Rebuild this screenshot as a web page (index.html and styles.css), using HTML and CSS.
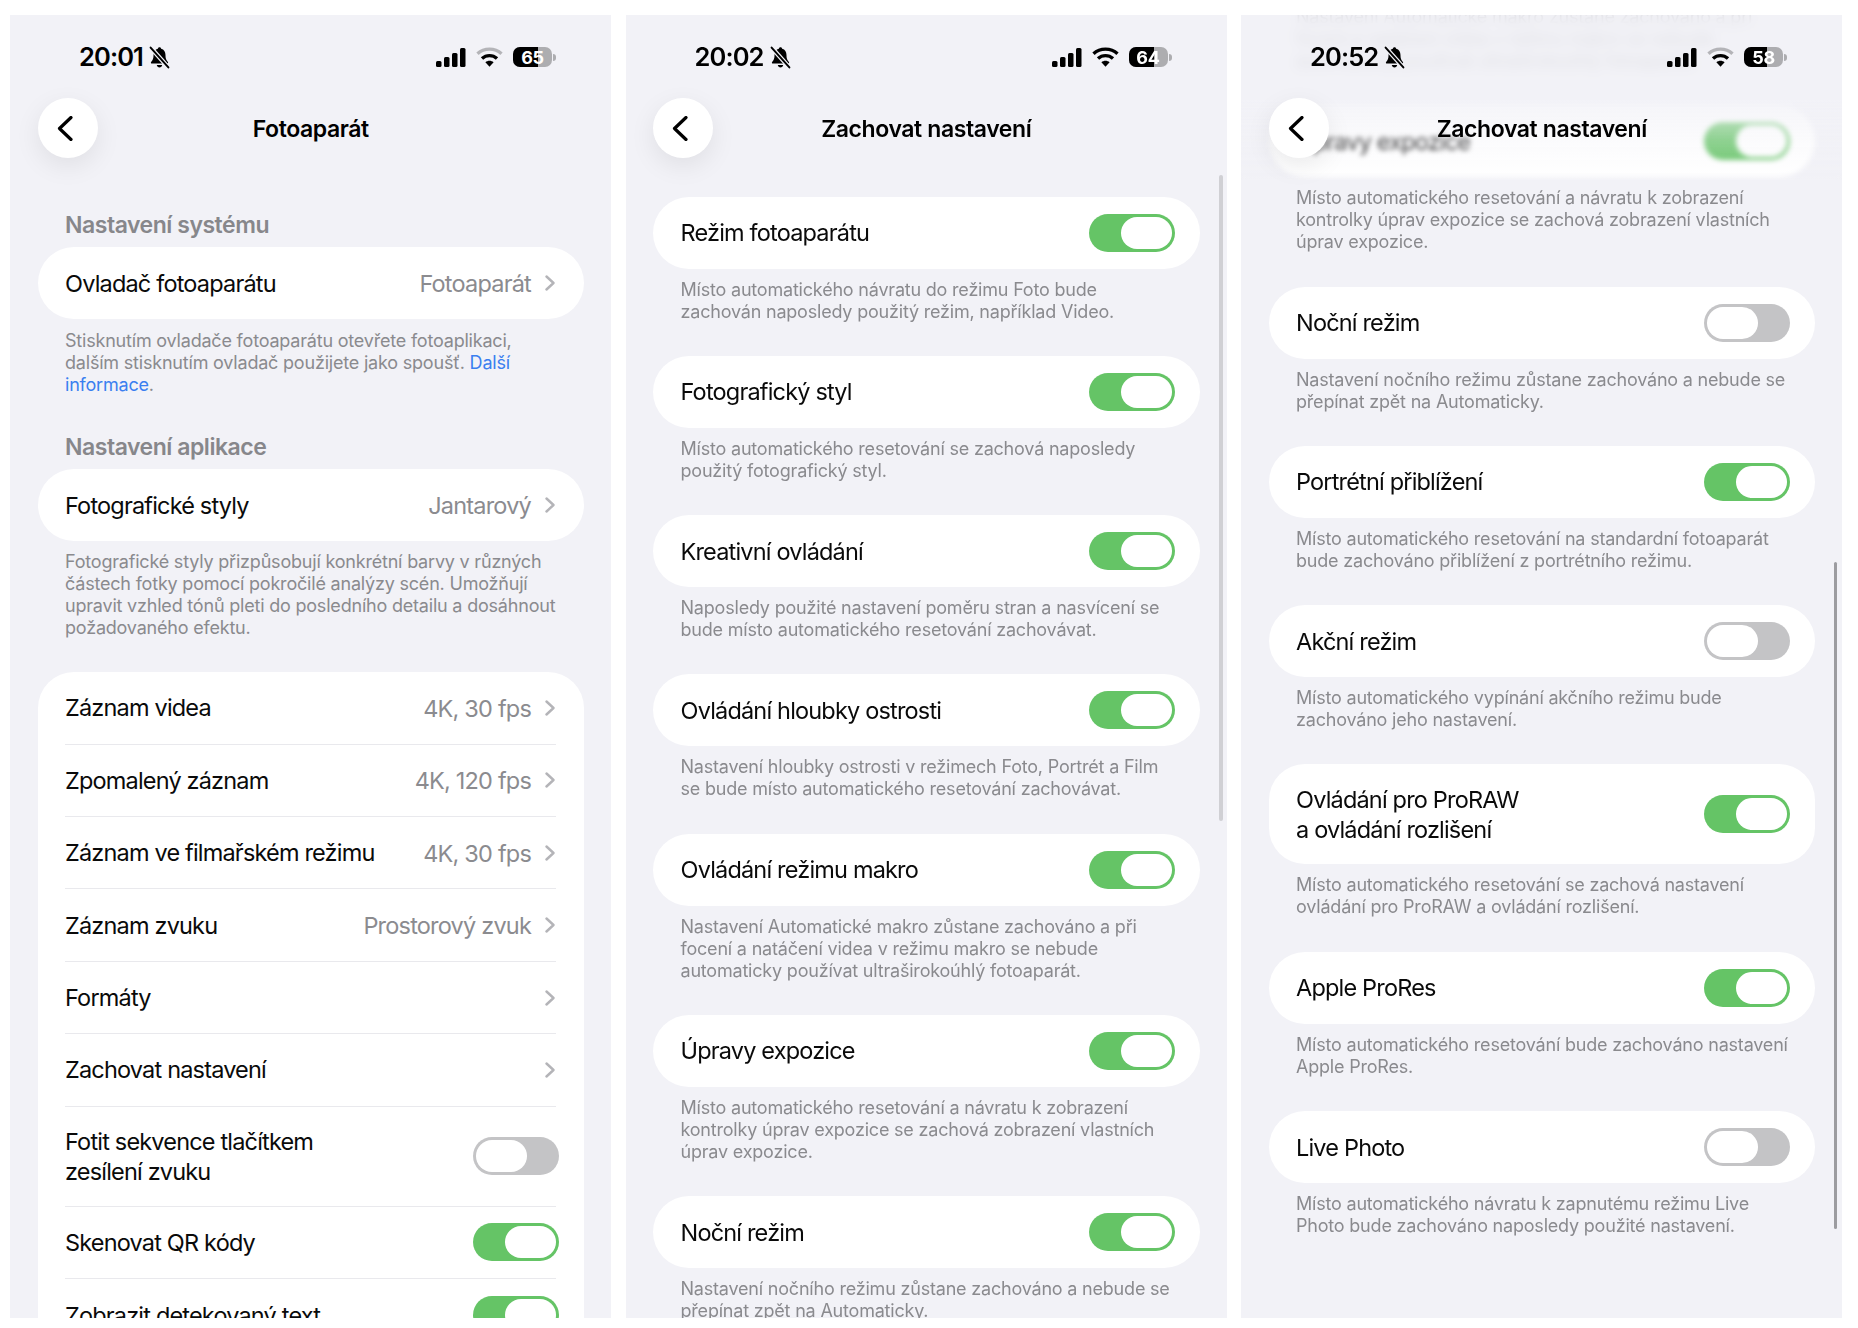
FILE: index.html
```html
<!DOCTYPE html>
<html lang="cs">
<head>
<meta charset="utf-8">
<title>Nastavení fotoaparátu</title>
<link rel="stylesheet" href="styles.css">
</head>
<body>
<svg class="defs" width="0" height="0" aria-hidden="true">
  <symbol id="bell" viewBox="0 0 20 22">
    <path d="M10 1.2c-.9 0-1.5.6-1.6 1.4C5.700 3.300 4.300 5.600 4.300 8.400c0 3.700-.6 5-2.300 6.900-.5.6-.2 1.500.7 1.500h14.600c.9 0 1.200-.9.700-1.500-1.700-1.900-2.300-3.200-2.300-6.900 0-2.800-1.400-5.100-4.100-5.800-.1-.8-.7-1.400-1.600-1.400zM7.400 18.200c.2 1.400 1.300 2.400 2.600 2.400s2.400-1 2.600-2.400z" fill="#000"/>
    <path d="M1.500 1.500l17 19" stroke="#f2f2f7" stroke-width="4.200" fill="none"/>
    <path d="M1.500 1.500l17 19" stroke="#000" stroke-width="1.900" stroke-linecap="round" fill="none"/>
  </symbol>
  <symbol id="signal" viewBox="0 0 30 19">
    <rect x="0" y="13" width="5.500" height="6" rx="1.500"/>
    <rect x="8" y="9" width="5.500" height="10" rx="1.500"/>
    <rect x="16" y="5" width="5.500" height="14" rx="1.500"/>
    <rect x="24" y="0" width="5.500" height="19" rx="1.500"/>
  </symbol>
  <symbol id="wifi" viewBox="0 0 27 20">
    <path d="M1.500 6.800C8.200 .6 18.800 .6 25.500 6.800" stroke="#b4b4b8" stroke-width="3.400" fill="none"/>
    <path d="M6 11.500c4.300-3.900 10.700-3.900 15 0" stroke="#000" stroke-width="3.400" fill="none"/>
    <path d="M9.400 15.300c2.400-2 5.800-2 8.200 0l-4.100 4.500z" fill="#000"/>
  </symbol>
  <symbol id="wifi-full" viewBox="0 0 27 20">
    <path d="M1.500 6.800C8.200 .6 18.800 .6 25.500 6.800" stroke="#000" stroke-width="3.400" fill="none"/>
    <path d="M6 11.500c4.300-3.900 10.700-3.900 15 0" stroke="#000" stroke-width="3.400" fill="none"/>
    <path d="M9.400 15.300c2.400-2 5.800-2 8.200 0l-4.100 4.500z" fill="#000"/>
  </symbol>
  <symbol id="back" viewBox="0 0 16 25">
    <path d="M14 1.500L2.500 12.500 14 23.500" stroke="#000" stroke-width="3.200" stroke-linecap="round" stroke-linejoin="round" fill="none"/>
  </symbol>
  <symbol id="chev" viewBox="0 0 10 16">
    <path d="M1.500 1.500L8.500 8 1.500 14.500" stroke="#b4b4b8" stroke-width="2.400" stroke-linecap="round" stroke-linejoin="round" fill="none"/>
  </symbol>
</svg>

<main class="page">

  <section class="phone">
    <div class="content content-a">
      <h2 class="group-title">Nastavení systému</h2>
      <div class="card">
        <div class="row"><span class="label">Ovladač fotoaparátu</span><span class="value">Fotoaparát</span><svg class="chev"><use href="#chev"/></svg></div>
      </div>
      <p class="foot foot-tight">Stisknutím ovladače fotoaparátu otevřete fotoaplikaci,<br>dalším stisknutím ovladač použijete jako spoušť. <a class="link">Další<br>informace</a>.</p>
      <h2 class="group-title">Nastavení aplikace</h2>
      <div class="card">
        <div class="row"><span class="label">Fotografické styly</span><span class="value">Jantarový</span><svg class="chev"><use href="#chev"/></svg></div>
      </div>
      <p class="foot">Fotografické styly přizpůsobují konkrétní barvy v různých<br>částech fotky pomocí pokročilé analýzy scén. Umožňují<br>upravit vzhled tónů pleti do posledního detailu a dosáhnout<br>požadovaného efektu.</p>
      <div class="card card-list">
        <div class="row row-list"><span class="label">Záznam videa</span><span class="value">4K, 30 fps</span><svg class="chev"><use href="#chev"/></svg></div>
        <div class="row row-list"><span class="label">Zpomalený záznam</span><span class="value">4K, 120 fps</span><svg class="chev"><use href="#chev"/></svg></div>
        <div class="row row-list"><span class="label">Záznam ve filmařském režimu</span><span class="value">4K, 30 fps</span><svg class="chev"><use href="#chev"/></svg></div>
        <div class="row row-list"><span class="label">Záznam zvuku</span><span class="value">Prostorový zvuk</span><svg class="chev"><use href="#chev"/></svg></div>
        <div class="row row-list"><span class="label">Formáty</span><svg class="chev"><use href="#chev"/></svg></div>
        <div class="row row-list"><span class="label">Zachovat nastavení</span><svg class="chev"><use href="#chev"/></svg></div>
        <div class="row row-list row-tall"><span class="label">Fotit sekvence tlačítkem<br>zesílení zvuku</span><span class="toggle off"><span class="knob"></span></span></div>
        <div class="row row-list"><span class="label">Skenovat QR kódy</span><span class="toggle on"><span class="knob"></span></span></div>
        <div class="row row-list"><span class="label">Zobrazit detekovaný text</span><span class="toggle on"><span class="knob"></span></span></div>
      </div>
    </div>
    <div class="status">
      <div class="clock"><span class="time">20:01</span><svg class="bell"><use href="#bell"/></svg></div>
      <div class="indicators">
        <svg class="signal"><use href="#signal"/></svg><svg class="wifi"><use href="#wifi"/></svg>
        <span class="battery"><span class="batt-body"><span class="batt-fill fill-65"></span><span class="batt-num">65</span></span><span class="batt-nub"></span></span>
      </div>
    </div>
    <header class="nav">
      <span class="back"><svg class="back-icon"><use href="#back"/></svg></span>
      <h1 class="nav-title">Fotoaparát</h1>
    </header>
  </section>

  <section class="phone">
    <div class="content content-b">
      <div class="card"><div class="row"><span class="label">Režim fotoaparátu</span><span class="toggle on"><span class="knob"></span></span></div></div>
      <p class="foot">Místo automatického návratu do režimu Foto bude<br>zachován naposledy použitý režim, například Video.</p>
      <div class="card"><div class="row"><span class="label">Fotografický styl</span><span class="toggle on"><span class="knob"></span></span></div></div>
      <p class="foot">Místo automatického resetování se zachová naposledy<br>použitý fotografický styl.</p>
      <div class="card"><div class="row"><span class="label">Kreativní ovládání</span><span class="toggle on"><span class="knob"></span></span></div></div>
      <p class="foot">Naposledy použité nastavení poměru stran a nasvícení se<br>bude místo automatického resetování zachovávat.</p>
      <div class="card"><div class="row"><span class="label">Ovládání hloubky ostrosti</span><span class="toggle on"><span class="knob"></span></span></div></div>
      <p class="foot">Nastavení hloubky ostrosti v režimech Foto, Portrét a Film<br>se bude místo automatického resetování zachovávat.</p>
      <div class="card"><div class="row"><span class="label">Ovládání režimu makro</span><span class="toggle on"><span class="knob"></span></span></div></div>
      <p class="foot">Nastavení Automatické makro zůstane zachováno a při<br>focení a natáčení videa v režimu makro se nebude<br>automaticky používat ultraširokoúhlý fotoaparát.</p>
      <div class="card"><div class="row"><span class="label">Úpravy expozice</span><span class="toggle on"><span class="knob"></span></span></div></div>
      <p class="foot">Místo automatického resetování a návratu k zobrazení<br>kontrolky úprav expozice se zachová zobrazení vlastních<br>úprav expozice.</p>
      <div class="card"><div class="row"><span class="label">Noční režim</span><span class="toggle on"><span class="knob"></span></span></div></div>
      <p class="foot">Nastavení nočního režimu zůstane zachováno a nebude se<br>přepínat zpět na Automaticky.</p>
    </div>
    <span class="scrollbar bar-b"></span>
    <div class="status">
      <div class="clock"><span class="time">20:02</span><svg class="bell"><use href="#bell"/></svg></div>
      <div class="indicators">
        <svg class="signal"><use href="#signal"/></svg><svg class="wifi"><use href="#wifi-full"/></svg>
        <span class="battery"><span class="batt-body"><span class="batt-fill fill-64"></span><span class="batt-num">64</span></span><span class="batt-nub"></span></span>
      </div>
    </div>
    <header class="nav">
      <span class="back"><svg class="back-icon"><use href="#back"/></svg></span>
      <h1 class="nav-title">Zachovat nastavení</h1>
    </header>
  </section>

  <section class="phone">
    <div class="content content-c">
      <p class="foot">Nastavení Automatické makro zůstane zachováno a při<br>focení a natáčení videa v režimu makro se nebude<br>automaticky používat ultraširokoúhlý fotoaparát.</p>
      <div class="card"><div class="row"><span class="label">Úpravy expozice</span><span class="toggle on"><span class="knob"></span></span></div></div>
      <p class="foot">Místo automatického resetování a návratu k zobrazení<br>kontrolky úprav expozice se zachová zobrazení vlastních<br>úprav expozice.</p>
      <div class="card"><div class="row"><span class="label">Noční režim</span><span class="toggle off"><span class="knob"></span></span></div></div>
      <p class="foot">Nastavení nočního režimu zůstane zachováno a nebude se<br>přepínat zpět na Automaticky.</p>
      <div class="card"><div class="row"><span class="label">Portrétní přiblížení</span><span class="toggle on"><span class="knob"></span></span></div></div>
      <p class="foot">Místo automatického resetování na standardní fotoaparát<br>bude zachováno přiblížení z portrétního režimu.</p>
      <div class="card"><div class="row"><span class="label">Akční režim</span><span class="toggle off"><span class="knob"></span></span></div></div>
      <p class="foot">Místo automatického vypínání akčního režimu bude<br>zachováno jeho nastavení.</p>
      <div class="card"><div class="row row-tall"><span class="label">Ovládání pro ProRAW<br>a ovládání rozlišení</span><span class="toggle on"><span class="knob"></span></span></div></div>
      <p class="foot">Místo automatického resetování se zachová nastavení<br>ovládání pro ProRAW a ovládání rozlišení.</p>
      <div class="card"><div class="row"><span class="label">Apple ProRes</span><span class="toggle on"><span class="knob"></span></span></div></div>
      <p class="foot">Místo automatického resetování bude zachováno nastavení<br>Apple ProRes.</p>
      <div class="card"><div class="row"><span class="label">Live Photo</span><span class="toggle off"><span class="knob"></span></span></div></div>
      <p class="foot">Místo automatického návratu k zapnutému režimu Live<br>Photo bude zachováno naposledy použité nastavení.</p>
    </div>
    <div class="veil"></div>
    <span class="scrollbar bar-c"></span>
    <div class="status">
      <div class="clock"><span class="time">20:52</span><svg class="bell"><use href="#bell"/></svg></div>
      <div class="indicators">
        <svg class="signal"><use href="#signal"/></svg><svg class="wifi"><use href="#wifi"/></svg>
        <span class="battery"><span class="batt-body"><span class="batt-fill fill-58"></span><span class="batt-num">58</span></span><span class="batt-nub"></span></span>
      </div>
    </div>
    <header class="nav">
      <span class="back"><svg class="back-icon"><use href="#back"/></svg></span>
      <h1 class="nav-title">Zachovat nastavení</h1>
    </header>
  </section>

</main>
</body>
</html>
```

FILE: styles.css
```css
* { box-sizing: border-box; }

html, body {
  margin: 0;
  background: #fff;
}

body {
  font-family: Inter, "Liberation Sans", sans-serif;
  color: #000;
  overflow: hidden;
}

.defs { position: absolute; }

.page {
  display: flex;
  gap: 14.5px;
  padding: 15px 0 0 10px;
  filter: blur(0.35px);
}

.phone {
  position: relative;
  flex: 0 0 601px;
  height: 1303px;
  background: #f2f2f7;
  overflow: hidden;
}

.content { padding: 0 27px 0 27.5px; }
.content-a { padding-top: 195px; }
.content-b { padding-top: 181.5px; }
.content-c { margin-top: -19px; }

.group-title {
  margin: 0 0 7px;
  padding-left: 27.5px;
  font-size: 23px;
  line-height: 30px;
  font-weight: 600;
  letter-spacing: -0.47px;
  color: #87878b;
}

.card {
  background: #fff;
  border-radius: 36px;
  overflow: hidden;
}

.card-list { border-radius: 36px 36px 0 0; }

.row {
  display: flex;
  align-items: center;
  min-height: 72px;
  padding: 0 25px 0 27.5px;
}

.row-list {
  min-height: 0;
  height: 72.4px;
  margin: 0 28px 0 27.5px;
  padding: 0;
  border-bottom: 1.5px solid #e9e9ed;
}

.row-list:last-child { border-bottom: 0; }
.row-tall { min-height: 100px; height: 100px; }

.label {
  flex: 1;
  padding-top: 1px;
  font-size: 23.5px;
  line-height: 30px;
  letter-spacing: -0.82px;
  color: #0a0a0a;
}

.value {
  padding-top: 1px;
  font-size: 23.5px;
  letter-spacing: -0.8px;
  color: #8b8b8f;
}

.chev {
  flex: none;
  width: 10px;
  height: 16px;
  margin: 0 4px 0 14px;
}

.row-list .chev { margin-right: 1px; }

.foot {
  margin: 0;
  padding: 10px 0 33.3px 27.5px;
  font-size: 18px;
  line-height: 22px;
  letter-spacing: -0.2px;
  color: #8a8a8e;
}

.foot-tight { padding-top: 11px; padding-bottom: 36px; }
.link { color: #3a7ff0; }

.toggle {
  flex: none;
  display: flex;
  width: 86px;
  height: 38px;
  padding: 3px;
  border-radius: 19px;
}

.row-list .toggle { margin-right: -3px; }
.toggle.on { background: #65c466; justify-content: flex-end; }
.toggle.off { background: #c4c4c6; }

.knob {
  width: 51px;
  height: 32px;
  border-radius: 16px;
  background: #fff;
}

.status {
  position: absolute;
  top: 27px;
  left: 69px;
  right: 55px;
  height: 30px;
  display: flex;
  justify-content: space-between;
  align-items: center;
}

.clock { display: flex; align-items: center; gap: 6px; }

.time {
  font-size: 25.5px;
  line-height: 30px;
  font-weight: 600;
  letter-spacing: -0.9px;
}

.bell { width: 21px; height: 23px; }

.indicators { display: flex; align-items: center; }
.signal { width: 30px; height: 19px; margin-top: 1px; }
.wifi { width: 27px; height: 20px; margin-left: 10px; }

.battery {
  display: flex;
  align-items: center;
  margin-left: 10px;
}

.batt-body {
  position: relative;
  width: 39px;
  height: 20px;
  border-radius: 7px;
  background: #adadb0;
  overflow: hidden;
  display: flex;
  align-items: center;
  justify-content: center;
}

.batt-fill {
  position: absolute;
  left: 0;
  top: 0;
  bottom: 0;
  background: #000;
}

.fill-65 { width: 25px; }
.fill-64 { width: 25px; }
.fill-58 { width: 22.5px; }

.batt-num {
  position: relative;
  font-size: 18px;
  font-weight: 700;
  letter-spacing: -0.3px;
  color: #fff;
}

.batt-nub {
  width: 3px;
  height: 7px;
  margin-left: 1px;
  border-radius: 0 3px 3px 0;
  background: #adadb0;
}

.nav {
  position: absolute;
  top: 83px;
  left: 27.5px;
  right: 27px;
  height: 60px;
  display: flex;
  align-items: center;
  justify-content: center;
}

.back {
  position: absolute;
  left: 0;
  top: 0;
  width: 60px;
  height: 60px;
  display: flex;
  align-items: center;
  justify-content: center;
  padding-right: 6px;
  border-radius: 50%;
  background: #fff;
  box-shadow: 0 8px 26px rgba(0, 0, 0, 0.08);
}

.back-icon { width: 16px; height: 25px; }

.nav-title {
  margin: 1px 0 0;
  font-size: 23px;
  line-height: 30px;
  font-weight: 600;
  letter-spacing: -0.4px;
}

.scrollbar {
  position: absolute;
  width: 3.5px;
  border-radius: 2px;
}

.bar-b { left: 593.5px; top: 160px; height: 646px; background: #d0d0d4; }
.bar-c { left: 592.5px; top: 547px; height: 667px; background: #9c9ca0; }

.veil {
  position: absolute;
  left: 0;
  right: 0;
  top: 0;
  height: 165px;
}

.veil::before,
.veil::after {
  content: "";
  position: absolute;
  left: 0;
  right: 0;
}

.veil::before {
  top: 0;
  height: 85px;
  backdrop-filter: blur(6px);
  background: rgba(242, 242, 247, 0.82);
}

.veil::after {
  top: 85px;
  height: 80px;
  backdrop-filter: blur(2.5px);
  background: linear-gradient(rgba(242, 242, 247, 0.82), rgba(242, 242, 247, 0.3) 50%, rgba(242, 242, 247, 0));
}
```
